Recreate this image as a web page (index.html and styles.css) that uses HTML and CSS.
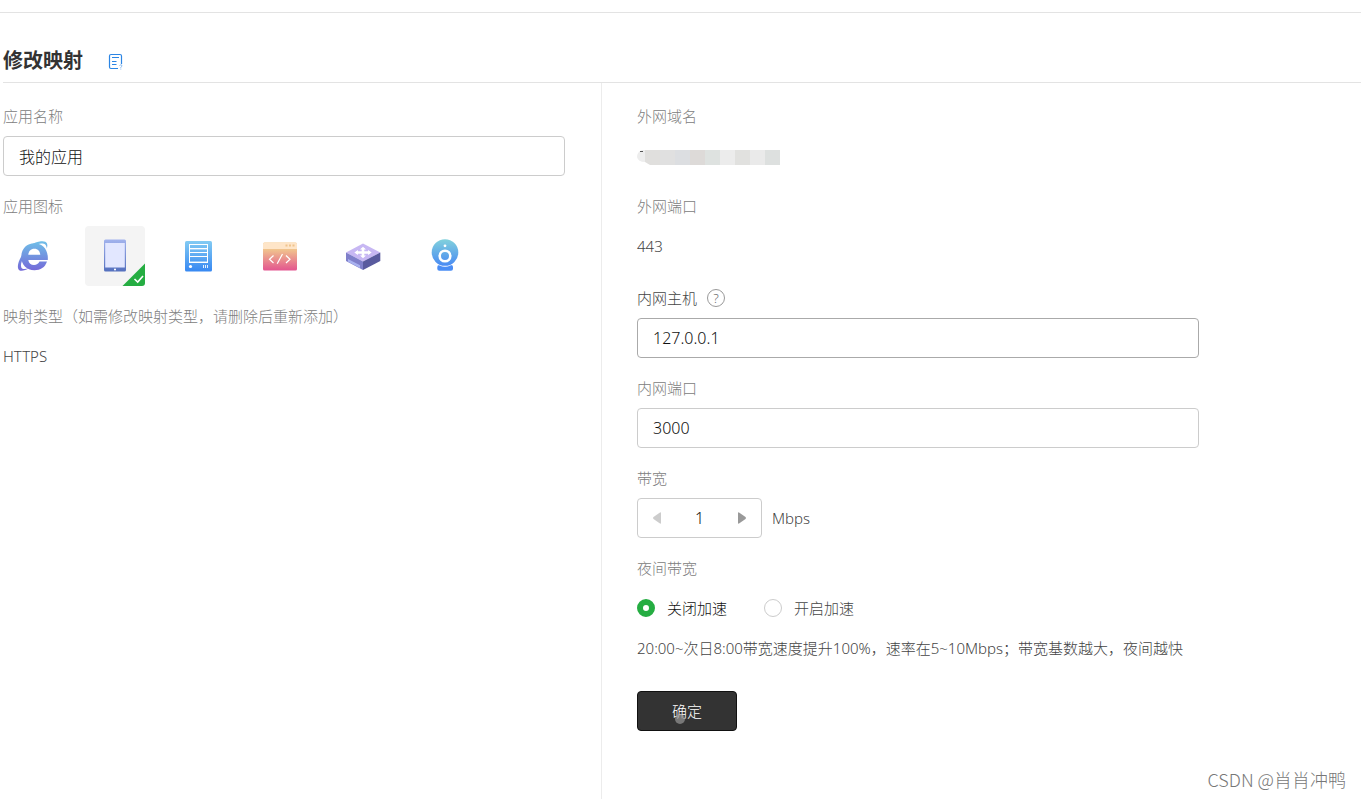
FILE: index.html
```html
<!DOCTYPE html>
<html lang="zh-CN">
<head>
<meta charset="utf-8">
<meta name="viewport" content="width=device-width, initial-scale=1">
<title>修改映射</title>
<link rel="stylesheet" href="styles.css">
</head>
<body>
<div class="topbar"></div>
<main class="page">
  <header class="page-head">
    <h1 class="title">修改映射</h1>
    <a class="doc-link" href="#" aria-label="帮助文档">
      <svg width="16" height="18" viewBox="0 0 16 18" fill="none" stroke="#2b85e4">
        <path d="M13.500 11V3Q13.500 1.500 12 1.500H3Q1.500 1.500 1.500 3V14Q1.500 15.500 3 15.500H10" stroke-width="1.200"/>
        <path d="M4 4.500H11M4 8.500H8.500M4 11.500H8.500"/>
        <path d="M11.500 12.500Q13 11 14 12.500Q14 13.500 12.800 14.300V15M12.800 15.600V16.500" stroke="#82b6ef"/>
      </svg>
    </a>
  </header>
  <form class="columns">
    <section class="col col-left">
      <div class="field">
        <label class="label" for="name">应用名称</label>
        <input class="input" id="name" type="text" value="我的应用">
      </div>
      <div class="field">
        <span class="label">应用图标</span>
        <div class="tiles">
          <button class="tile" type="button" aria-label="浏览器">
            <svg viewBox="0 0 60 60" fill="none">
              <defs><linearGradient id="g1" x1="0" y1="15" x2="0" y2="45" gradientUnits="userSpaceOnUse"><stop stop-color="#6fc0e8"/><stop offset="1" stop-color="#7468d8"/></linearGradient></defs>
              <path d="M44.800 34H25.300C25.800 37.500 28 39 31 39C33.500 39 35.500 37.500 36.500 35.500H44C42 41.500 37.500 44.200 31.500 44.200C23.500 44.200 18.300 38.500 18.300 31C18.300 23 23.500 17.300 31.500 17.300C40 17.300 45.500 24 44.800 34ZM25.300 28.700H37.300C37 25.300 35 22.700 31.300 22.700C27.700 22.700 25.600 25.300 25.300 28.700Z" fill="url(#g1)" fill-rule="evenodd"/>
              <path d="M19 28C23 21 31 16 38 15.300C44 14.700 45.400 18 43.800 22.500C43.500 18.500 41.500 17.300 38 17.500C31 18.500 23.500 22.500 19 28Z" fill="url(#g1)"/>
              <path d="M19.500 28.500C15 35 13.500 42 16.300 44.200C18.500 45.500 22.500 44.200 26 42.300C22 43.500 19.300 43.500 18.300 41.500C17.300 39 18.500 35.500 20 33Z" fill="url(#g1)"/>
            </svg>
          </button>
          <button class="tile tile-on" type="button" aria-label="平板" aria-pressed="true">
            <svg viewBox="0 0 60 60" fill="none">
              <defs><linearGradient id="g2" x1="0" y1="13" x2="0" y2="46" gradientUnits="userSpaceOnUse"><stop stop-color="#a3b4ee"/><stop offset="1" stop-color="#536fbd"/></linearGradient></defs>
              <rect x="19" y="13.500" width="22" height="32" rx="1.500" fill="url(#g2)"/>
              <rect x="20.200" y="17" width="19.600" height="24.500" fill="#e2e7ff"/>
              <rect x="29" y="42.700" width="2" height="1.600" fill="#fff"/>
              <path d="M60 37.500V57Q60 60 57 60H37.500Z" fill="#25ad42"/>
              <path d="M49.500 53L52.700 56L58 50" stroke="#fff" stroke-width="1.600"/>
            </svg>
          </button>
          <button class="tile" type="button" aria-label="服务器">
            <svg viewBox="0 0 60 60" fill="none">
              <defs><linearGradient id="g3" x1="0" y1="15" x2="0" y2="45" gradientUnits="userSpaceOnUse"><stop stop-color="#83cbf3"/><stop offset="1" stop-color="#3889f2"/></linearGradient></defs>
              <rect x="17" y="15" width="27" height="30.500" rx="1.500" fill="url(#g3)"/>
              <rect x="21.500" y="18.500" width="18" height="18" stroke="#fff"/>
              <path d="M22 22.500H39M22 26.500H39M22 30.500H39" stroke="#fff"/>
              <path d="M22 23.500H39M22 35.500H39" stroke="#b9dcfa" stroke-opacity=".7"/>
              <circle cx="22.500" cy="40.500" r="1.600" fill="#fff"/>
              <path d="M35.500 39V42M37.500 39V42M39.500 39V42" stroke="#e4f0ff"/>
            </svg>
          </button>
          <button class="tile" type="button" aria-label="网页代码">
            <svg viewBox="0 0 60 60" fill="none">
              <defs><linearGradient id="g4" x1="0" y1="22" x2="0" y2="45" gradientUnits="userSpaceOnUse"><stop stop-color="#f1cb8d"/><stop offset="1" stop-color="#e3528f"/></linearGradient></defs>
              <rect x="13" y="16.500" width="34" height="28" rx="1.500" fill="url(#g4)"/>
              <path d="M13 23V18Q13 16.500 14.500 16.500H45.500Q47 16.500 47 18V23Z" fill="#fee5c8"/>
              <path d="M35.500 19.500H37.500M39 19.500H41M42.500 19.500H44.500" stroke="#efc48b" stroke-width="2"/>
              <path d="M23.500 29.500L19.500 33.300L23.500 37M32.500 28L27.200 37.700M36 29.500L40 33.300L36 37" stroke="#fff" stroke-width="1.200"/>
            </svg>
          </button>
          <button class="tile" type="button" aria-label="路由器">
            <svg viewBox="0 0 60 60" fill="none">
              <path d="M13 26.500L30 17.500L47.300 26.500L30 35.500Z" fill="#c7b7f3"/>
              <path d="M13 26.500L30 35.500V44L13 35Z" fill="#7f7fca"/>
              <path d="M47.300 26.500L30 35.500V44L47.300 35Z" fill="#595a9e"/>
              <path d="M15 33L27 39.200V42L15 35.700Z" fill="#a9b2f0"/>
              <path d="M23 26.500H37M30 22V31" stroke="#fff" stroke-width="2.600"/>
              <path d="M21.300 26.500L25 24V29ZM38.700 26.500L35 24V29ZM30 20.700L33 23.500H27ZM30 32.300L33 29.500H27Z" fill="#fff"/>
            </svg>
          </button>
          <button class="tile" type="button" aria-label="摄像头">
            <svg viewBox="0 0 60 60" fill="none">
              <defs><linearGradient id="g6" x1="0" y1="13" x2="0" y2="42" gradientUnits="userSpaceOnUse"><stop stop-color="#82d2dc"/><stop offset="1" stop-color="#4484f5"/></linearGradient></defs>
              <rect x="22.300" y="39" width="15.700" height="5.700" rx="2" fill="#4a8df5"/>
              <circle cx="30" cy="26.500" r="14.200" fill="#fff"/>
              <circle cx="30" cy="26.500" r="13.300" fill="url(#g6)"/>
              <circle cx="30" cy="30" r="5.300" stroke="#fff" stroke-width="2.600"/>
              <circle cx="30" cy="19.800" r="1.400" fill="#fff"/>
            </svg>
          </button>
        </div>
      </div>
      <div class="field">
        <span class="label">映射类型（如需修改映射类型，请删除后重新添加）</span>
        <div class="value">HTTPS</div>
      </div>
    </section>
    <section class="col col-right">
      <div class="field">
        <span class="label">外网域名</span>
        <div class="value value-masked">
          <svg width="143" height="15" viewBox="0 0 143 15" role="img" aria-label="已隐藏的域名">
            <path d="M8 0H5Q0 2 0 7Q1 12 8 12Z" fill="#ededed"/>
            <path d="M3 1.500H6" stroke="#555"/>
            <path d="M8 0H23V15H13L8 12Z" fill="#e0dfdd"/>
            <path d="M23 0h15v15h-15z" fill="#e0e0e0"/>
            <path d="M38 0h15v15h-15z" fill="#dcdee1"/>
            <path d="M53 0h15v15h-15z" fill="#dddad8"/>
            <path d="M68 0h15v15h-15z" fill="#dee2e0"/>
            <path d="M83 0h15v15h-15z" fill="#ececec"/>
            <path d="M98 0h15v15h-15z" fill="#e1e1df"/>
            <path d="M113 0h15v15h-15z" fill="#eaeaea"/>
            <path d="M128 0h15v15h-15z" fill="#dde0df"/>
          </svg>
        </div>
      </div>
      <div class="field">
        <span class="label">外网端口</span>
        <div class="value">443</div>
      </div>
      <div class="field">
        <div class="label label-help">
          <label for="host">内网主机</label>
          <button class="help" type="button" aria-label="内网主机说明">?</button>
        </div>
        <input class="input input-active" id="host" type="text" value="127.0.0.1">
      </div>
      <div class="field">
        <label class="label" for="port">内网端口</label>
        <input class="input" id="port" type="text" value="3000">
      </div>
      <div class="field">
        <label class="label" for="bandwidth">带宽</label>
        <div class="bandwidth">
          <div class="stepper">
            <button class="step step-off" type="button" aria-label="减少"><svg width="8" height="12" viewBox="0 0 8 12"><path d="M8 1V11Q8 12 7 11.500L.5 7Q-.3 6 .5 5L7 .5Q8 0 8 1Z" fill="currentColor"/></svg></button>
            <input class="count" id="bandwidth" type="text" value="1">
            <button class="step" type="button" aria-label="增加"><svg width="8" height="12" viewBox="0 0 8 12"><path d="M0 1V11Q0 12 1 11.500L7.500 7Q8.300 6 7.500 5L1 .5Q0 0 0 1Z" fill="currentColor"/></svg></button>
          </div>
          <span class="unit">Mbps</span>
        </div>
      </div>
      <div class="field field-night">
        <span class="label">夜间带宽</span>
        <div class="radios">
          <label class="choice choice-on"><input class="radio" type="radio" name="night" checked>关闭加速</label>
          <label class="choice"><input class="radio" type="radio" name="night">开启加速</label>
        </div>
        <p class="hint">20:00~次日8:00带宽速度提升100%，速率在5~10Mbps；带宽基数越大，夜间越快</p>
      </div>
      <button class="submit" type="button">确定<span class="pointer"></span></button>
    </section>
  </form>
</main>
<div class="watermark">CSDN @肖肖冲鸭</div>
</body>
</html>
```
FILE: styles.css
```css
* { box-sizing: border-box; }

body {
  margin: 0;
  min-height: 100vh;
  display: flex;
  flex-direction: column;
  position: relative;
  background: #fff;
  color: #444;
  font: 300 15px/20px "Noto Sans", "Noto Sans CJK SC", sans-serif;
}

button, input { font: inherit; color: inherit; }
button { cursor: pointer; }

.topbar { height: 13px; border-bottom: 1px solid #e3e3e3; }

.page {
  flex: 1;
  display: flex;
  flex-direction: column;
  padding-left: 3px;
}

.page-head {
  display: flex;
  align-items: center;
  gap: 25px;
  height: 70px;
  padding-top: 26px;
  border-bottom: 1px solid #e3e3e3;
}
.title { margin: 0; font-size: 20px; line-height: 28px; font-weight: 700; color: #333; }
.doc-link { display: flex; padding-top: 2px; }

.columns { flex: 1; display: grid; grid-template-columns: 599fr 759fr; }
.col { padding: 23px 35px 32px 0; }
.col-left { border-right: 1px solid #ececec; }
.col-right { padding-left: 35px; }

.field { display: flex; flex-direction: column; gap: 10px; margin-bottom: 20px; max-width: 562px; }
.label { color: #808080; }
.value { display: flex; align-items: center; height: 40px; }
.value-masked { padding-top: 2px; }

.input {
  width: 100%;
  height: 40px;
  padding: 0 15px;
  border: 1px solid #ccc;
  border-radius: 4px;
  background: #fff;
  font-size: 16px;
  color: #111;
  outline: none;
}
.input-active { border-color: #aaa; }

.tiles { display: flex; justify-content: space-between; max-width: 472px; }
.tile { width: 60px; height: 60px; padding: 0; border: 0; border-radius: 4px; background: none; }
.tile svg { display: block; width: 60px; height: 60px; }
.tile-on { background: #f4f4f4; }

.label-help { display: flex; align-items: center; gap: 10px; height: 22px; padding-top: 2px; color: #444; }
.help {
  width: 18px;
  height: 18px;
  padding: 0;
  border: 1px solid #999;
  border-radius: 50%;
  background: none;
  font-size: 13px;
  line-height: 16px;
  color: #666;
}

.bandwidth { display: flex; align-items: center; gap: 10px; }
.stepper {
  display: flex;
  width: 125px;
  height: 40px;
  border: 1px solid #ccc;
  border-radius: 4px;
}
.step {
  display: flex;
  align-items: center;
  justify-content: center;
  width: 38px;
  padding: 0;
  border: 0;
  background: none;
  color: #999;
}
.step-off { color: #ccc; }
.count {
  flex: 1;
  min-width: 0;
  padding: 0;
  border: 0;
  background: none;
  text-align: center;
  font-size: 16px;
  color: #111;
}

.field-night { gap: 0; margin-bottom: 33px; }
.radios { display: flex; gap: 37px; height: 60px; align-items: center; }
.choice { display: flex; align-items: center; gap: 12px; }
.choice-on { color: #111; }
.radio {
  appearance: none;
  width: 18px;
  height: 18px;
  margin: 0;
  border: 1px solid #ccc;
  border-radius: 50%;
  background: #fff;
}
.radio:checked { border: 6px solid #25ad42; }
.hint { margin: 0; white-space: nowrap; }

.submit {
  position: relative;
  width: 100px;
  height: 40px;
  padding: 0;
  border: 1px solid #111;
  border-radius: 4px;
  background: #333;
  color: #fff;
}
.pointer {
  position: absolute;
  left: 37px;
  top: 22px;
  width: 10px;
  height: 10px;
  border-radius: 50%;
  background: rgba(150, 150, 150, .7);
}

.watermark {
  position: absolute;
  right: 15px;
  bottom: 8px;
  font: 300 18px/24px "Noto Sans CJK SC", sans-serif;
  color: #777;
}
```
